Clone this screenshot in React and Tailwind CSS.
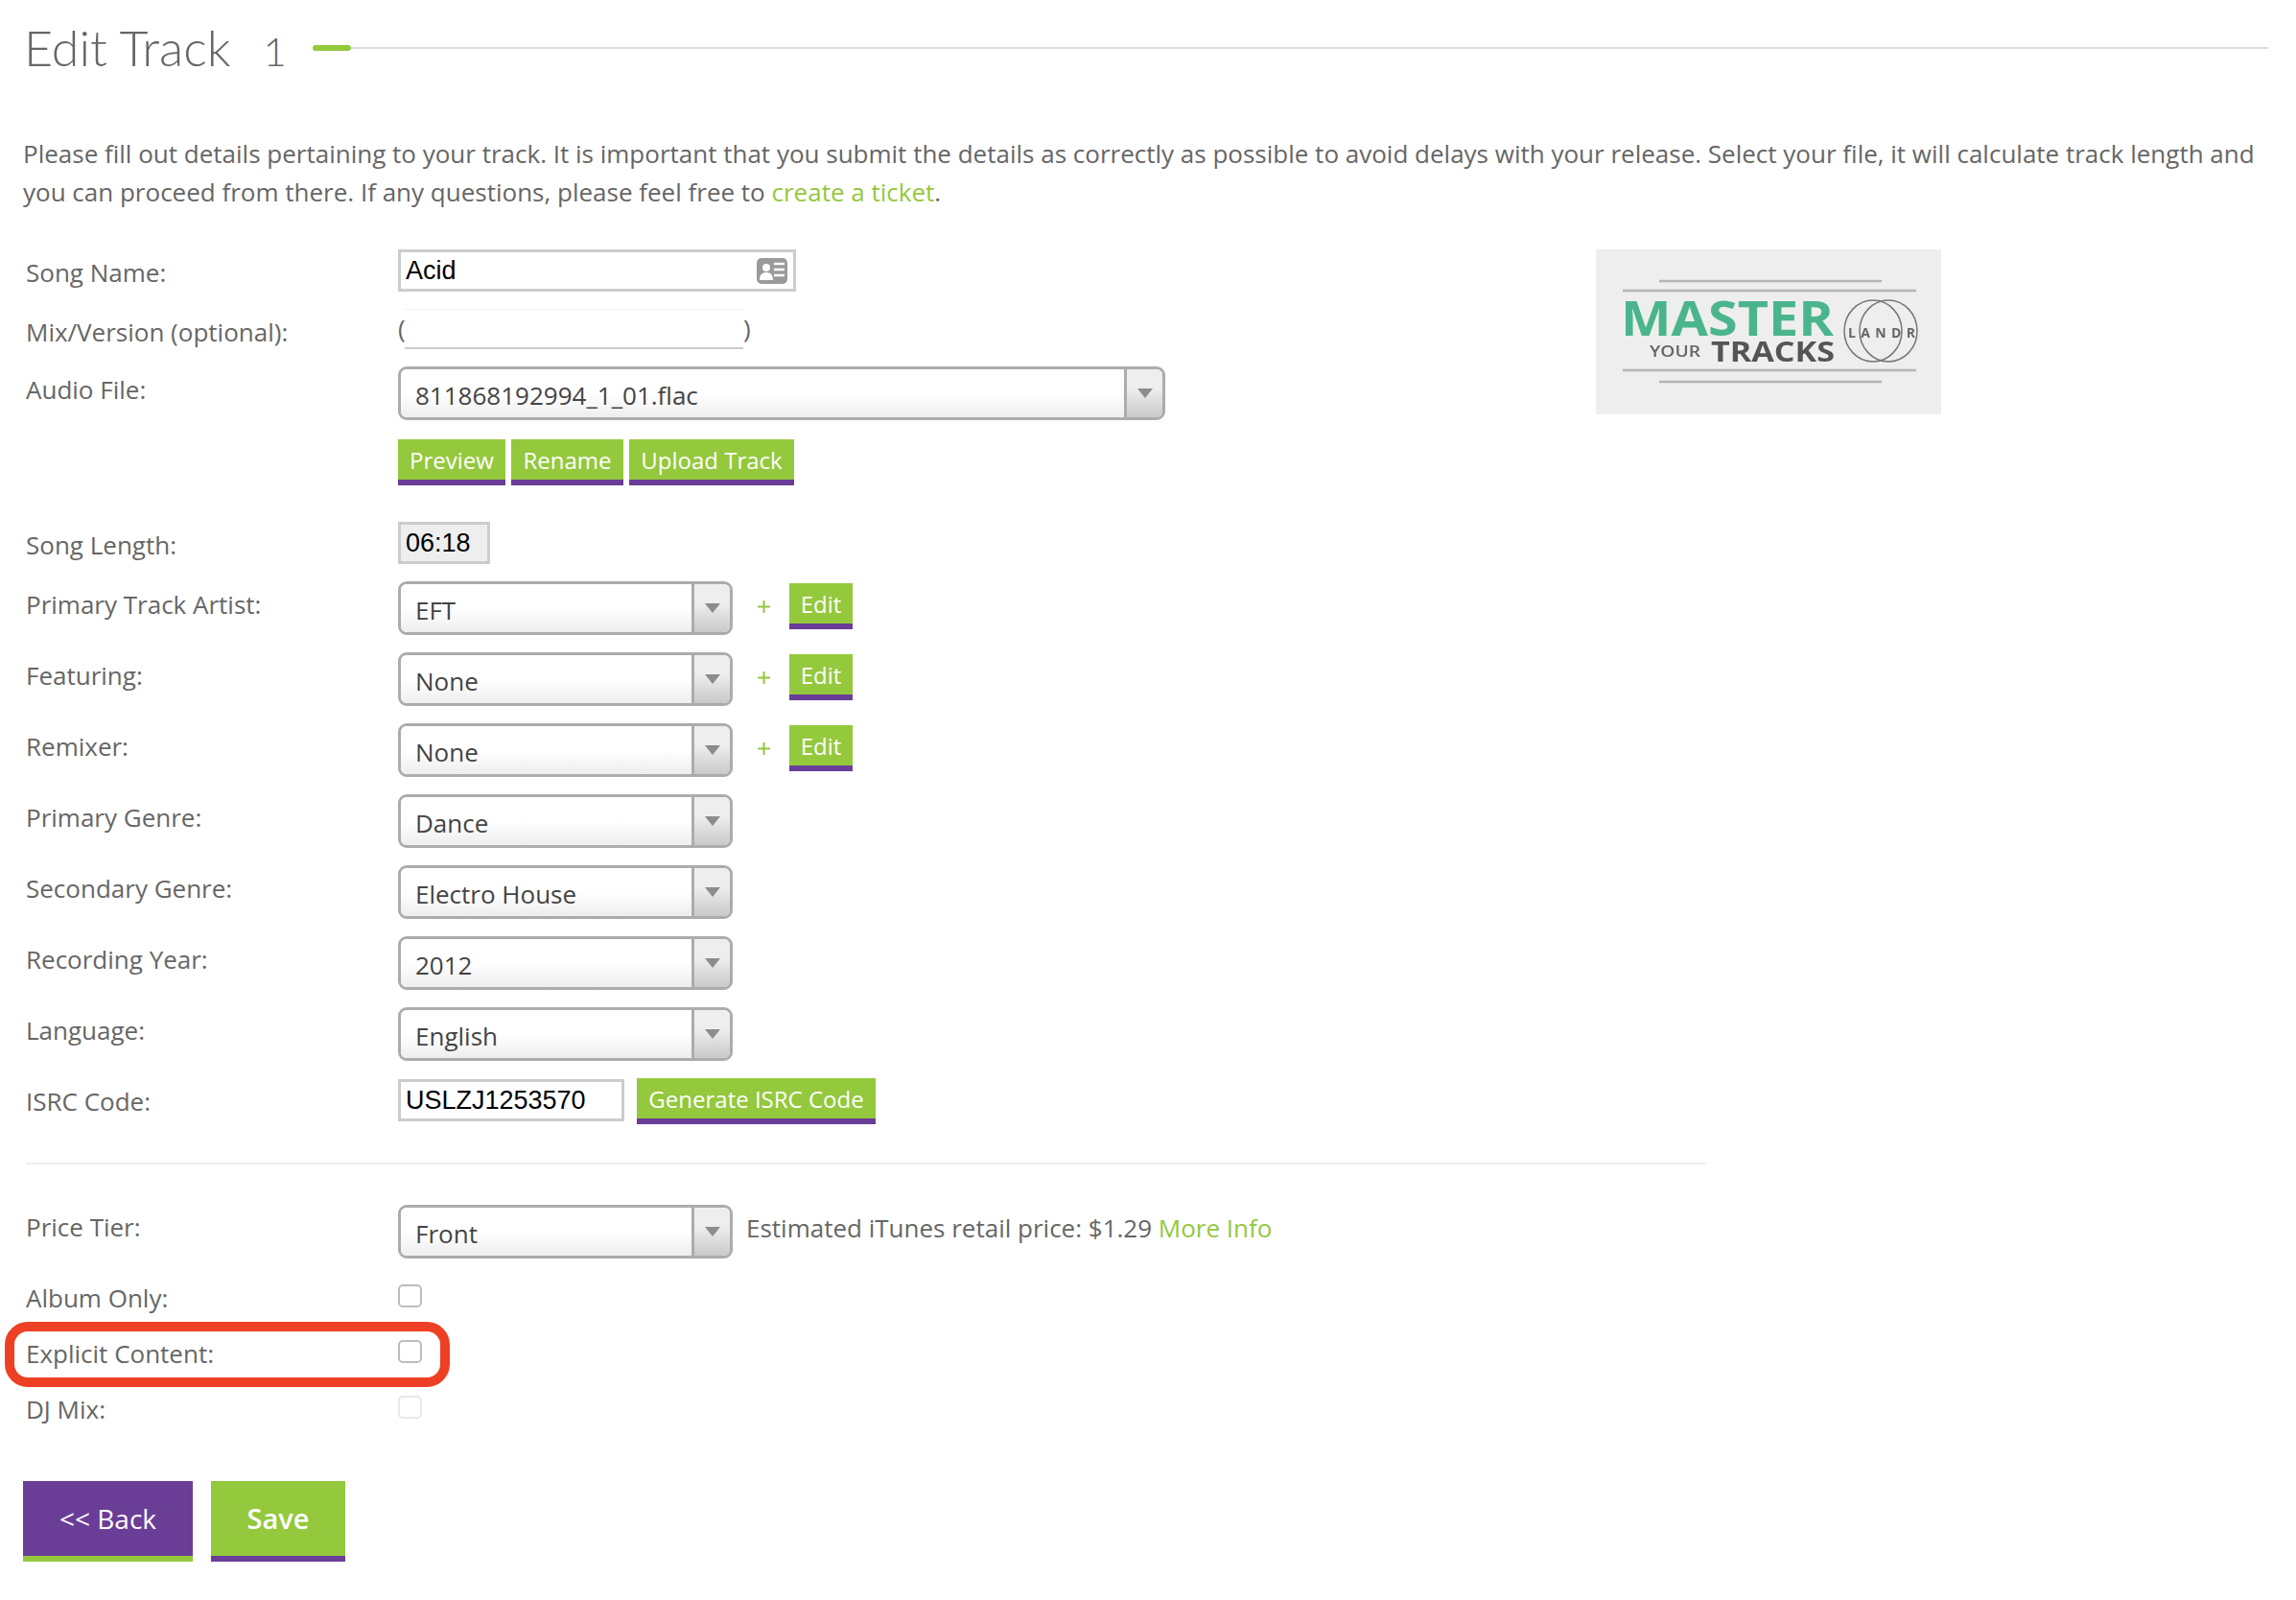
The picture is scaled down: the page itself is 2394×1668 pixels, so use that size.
import React from 'react';

const Label = ({ children, className = '' }) => (
    <div className={`w-[391px] shrink-0 pl-[3px] h-[40px] leading-[40px] text-[26px] text-[#666] ${className}`}>{children}</div>
);

const Btn = ({ children, className = '' }) => (
    <button className={`h-[48px] bg-[#94c83d] border-b-[6px] border-[#6a3d97] text-white text-[24px] font-medium leading-[44px] ${className}`}>
        {children}
    </button>
);

const Select = ({ value, wide }) => (
    <div className={`flex h-[56px] ${wide ? 'w-[800px]' : 'w-[349px]'} border-[3px] border-[#acacac] rounded-[9px] overflow-hidden shrink-0`}>
        <div className="flex-1 pl-[15px] pt-[5px] text-[26px] leading-[44px] text-[#444] bg-gradient-to-b from-white from-50% to-[#eeeeee]">
            {value}
        </div>
        <div className="w-[40px] border-l-[3px] border-[#acacac] flex items-center justify-center bg-gradient-to-b from-[#eeeeee] from-40% to-[#c9c9c9]">
            <svg width="16" height="10" viewBox="0 0 16 10"><path d="M0 0h16L8 10z" fill="#8c8c8c" /></svg>
        </div>
    </div>
);

const Plus = () => (
    <svg className="ml-[26px] mr-[20px] shrink-0" width="13" height="13" viewBox="0 0 13 13"><path d="M6.5 0v13M0 6.5h13" stroke="#94c83d" strokeWidth="2" /></svg>
);

const Checkbox = ({ faded }) => (
    <div className={`w-[25px] h-[24px] rounded-[5px] border-2 bg-white ${faded ? 'border-[#e8e8e8]' : 'border-[#bdbdbd]'}`} />
);

const SelectRow = ({ label, value, edit }) => (
    <div className="flex mt-[18px] h-[56px]">
        <Label className="mt-[4px]">{label}</Label>
        <Select value={value} />
        {edit && (
            <div className="flex items-center h-[48px] mt-[2px]">
                <Plus />
                <Btn className="w-[66px]">Edit</Btn>
            </div>
        )}
    </div>
);

const Logo = () => (
    <div className="w-[360px] h-[172px] bg-[#eeeeee] shrink-0">
        <svg className="blur-[0.5px]" width="360" height="172" viewBox="0 0 360 172" fontFamily="'Open Sans', sans-serif">
            <g stroke="#b5b5b5" strokeWidth="2.5">
                <path d="M66 33h232M28 43h306M28 126h306M66 138h232" />
            </g>
            <text x="26" y="90" fontSize="50" fontWeight="700" fill="#4ab58c" textLength="222" lengthAdjust="spacingAndGlyphs">MASTER</text>
            <text x="56" y="112" fontSize="16" fontWeight="600" fill="#666" textLength="53" lengthAdjust="spacingAndGlyphs">YOUR</text>
            <text x="120" y="117" fontSize="28" fontWeight="700" fill="#555" textLength="129" lengthAdjust="spacingAndGlyphs">TRACKS</text>
            <g fill="none" stroke="#777" strokeWidth="1.5">
                <ellipse cx="289" cy="85" rx="30" ry="32" />
                <ellipse cx="305" cy="85" rx="30" ry="32" />
            </g>
            <text x="263" y="92" fontSize="14" fontWeight="700" fill="#666" textLength="70" lengthAdjust="spacing">LANDR</text>
        </svg>
    </div>
);

export default function App() {
    return (
        <div className="relative w-[2394px] h-[1668px] bg-white overflow-hidden px-[24px] font-['Open_Sans',sans-serif] text-[#666]">
            {/* Title */}
            <div className="flex items-start h-[100px] w-[2341px]">
                <h1 className="pl-[1px] mt-[21px] text-[52px] leading-[56px] font-light text-[#666] font-['Lato',sans-serif]">Edit Track</h1>
                <span className="ml-[34px] mt-[25px] text-[42px] leading-[56px] font-light text-[#666] font-['Lato',sans-serif]">1</span>
                <div className="flex-1 flex items-center ml-[27px] mt-[47px]">
                    <div className="w-[40px] h-[6px] rounded-full bg-[#94c83d]" />
                    <div className="flex-1 h-[2px] bg-[#dddddd]" />
                </div>
            </div>

            {/* Intro */}
            <p className="mt-[40px] text-[26px] leading-[40px] w-[2346px]">
                Please fill out details pertaining to your track. It is important that you submit the details as correctly as possible to avoid delays with your release. Select your file, it will calculate track length and you can proceed from there. If any questions, please feel free to{' '}
                <a className="text-[#94c83d]">create a ticket</a>.
            </p>

            <div className="flex mt-[40px]">
                <div className="w-[1640px] shrink-0">
                    {/* Song name */}
                    <div className="flex h-[44px]">
                        <Label className="mt-[4px]">Song Name:</Label>
                        <div className="flex items-center justify-between w-[415px] h-[44px] border-[3px] border-[#cccccc] pl-[5px] pr-[6px] text-[27px] text-black font-['Liberation_Sans',sans-serif]">
                            Acid
                            {/* contact card icon */}
                            <svg width="32" height="27" viewBox="0 0 32 27">
                                <rect x="0" y="0" width="32" height="27" rx="5" fill="#9a9a9a" />
                                <circle cx="10" cy="10" r="4" fill="#fff" />
                                <path d="M3 23c0-6 3-8 7-8s7 2 7 8z" fill="#fff" />
                                <path d="M18 6h11M18 12h11M18 18h11" stroke="#fff" strokeWidth="2.5" />
                            </svg>
                        </div>
                    </div>

                    {/* Mix */}
                    <div className="flex mt-[18px] h-[42px]">
                        <Label className="mt-[4px]">Mix/Version (optional):</Label>
                        <span className="w-[7px] text-[26px] leading-[40px]">(</span>
                        <div className="w-[353px] h-[42px] border-t border-[#f2f2f2] border-b-[2px] border-b-[#cccccc]" />
                        <span className="text-[26px] leading-[40px]">)</span>
                    </div>

                    {/* Audio */}
                    <div className="flex mt-[18px] h-[56px]">
                        <Label className="mt-[4px]">Audio File:</Label>
                        <Select value="811868192994_1_01.flac" wide />
                    </div>
                    <div className="flex mt-[20px] gap-[6px] pl-[391px]">
                        <Btn className="w-[112px]">Preview</Btn>
                        <Btn className="w-[117px]">Rename</Btn>
                        <Btn className="w-[172px]">Upload Track</Btn>
                    </div>

                    {/* Length */}
                    <div className="flex mt-[38px] h-[44px]">
                        <Label className="mt-[4px]">Song Length:</Label>
                        <div className="w-[96px] h-[44px] border-[3px] border-[#cccccc] bg-[#eeeeee] pl-[5px] text-[27px] leading-[38px] text-black font-['Liberation_Sans',sans-serif]">06:18</div>
                    </div>

                    <SelectRow label="Primary Track Artist:" value="EFT" edit />
                    <SelectRow label="Featuring:" value="None" edit />
                    <SelectRow label="Remixer:" value="None" edit />
                    <SelectRow label="Primary Genre:" value="Dance" />
                    <SelectRow label="Secondary Genre:" value="Electro House" />
                    <SelectRow label="Recording Year:" value="2012" />
                    <SelectRow label="Language:" value="English" />

                    {/* ISRC */}
                    <div className="flex mt-[18px] h-[48px]">
                        <Label className="mt-[4px]">ISRC Code:</Label>
                        <div className="w-[236px] h-[44px] mt-[1px] border-[3px] border-[#cccccc] pl-[5px] text-[27px] leading-[38px] text-black font-['Liberation_Sans',sans-serif]">USLZJ1253570</div>
                        <Btn className="ml-[13px] w-[249px]">Generate ISRC Code</Btn>
                    </div>
                </div>
                <Logo />
            </div>

            <div className="mt-[40px] ml-[3px] w-[1753px] h-[2px] bg-[#eeeeee]" />

            {/* Price */}
            <div className="flex mt-[42px] h-[56px]">
                <Label className="mt-[3px]">Price Tier:</Label>
                <Select value="Front" />
                <div className="ml-[14px] mt-[4px] text-[26px] leading-[40px]">
                    Estimated iTunes retail price: $1.29 <a className="text-[#94c83d]">More Info</a>
                </div>
            </div>

            {/* Flags */}
            <div className="flex mt-[27px] h-[24px]">
                <Label className="mt-[-6px]">Album Only:</Label>
                <Checkbox />
            </div>
            <div className="flex mt-[34px] h-[24px]">
                <Label className="mt-[-6px]">Explicit Content:</Label>
                <Checkbox />
            </div>
            <div className="flex mt-[34px] h-[24px]">
                <Label className="mt-[-6px]">DJ Mix:</Label>
                <Checkbox faded />
            </div>

            {/* Actions */}
            <div className="flex mt-[65px] gap-[19px]">
                <button className="w-[177px] h-[84px] bg-[#6a3d97] border-b-[6px] border-[#94c83d] text-white text-[28px] font-medium">&lt;&lt; Back</button>
                <button className="w-[140px] h-[84px] bg-[#94c83d] border-b-[6px] border-[#6a3d97] text-white text-[29px] font-semibold">Save</button>
            </div>

            {/* Red annotation */}
            <div className="absolute left-[5px] top-[1378px] w-[464px] h-[68px] border-[10px] border-[#ee4024] rounded-[24px] pointer-events-none" />
        </div>
    );
}
